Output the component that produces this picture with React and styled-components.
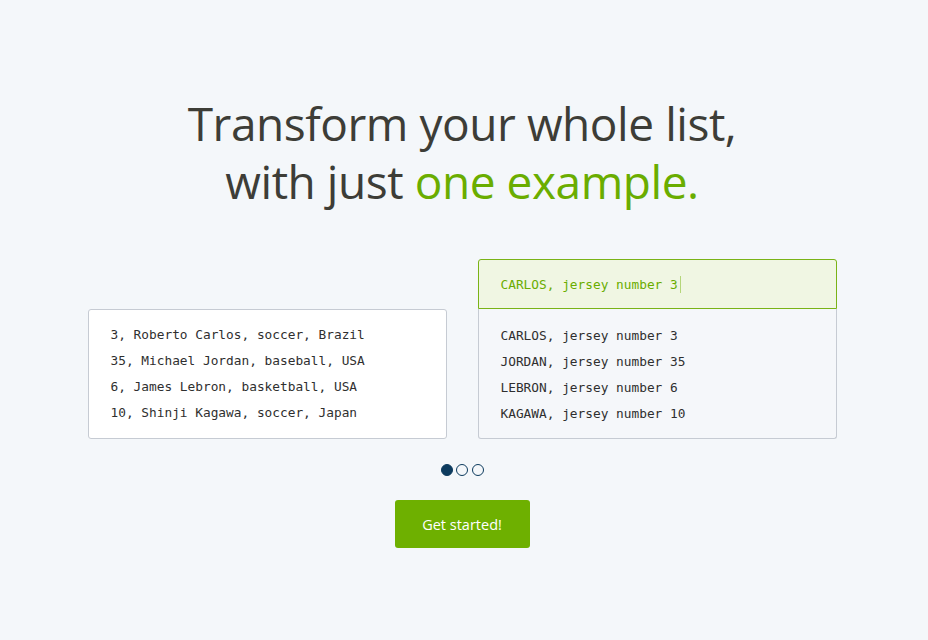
import React from 'react';
import styled, { createGlobalStyle } from 'styled-components';

const GlobalStyle = createGlobalStyle`
    body {
        margin: 0;
        background: #f4f7fa;
        font-family: "Open Sans", "Liberation Sans", sans-serif;
    }
`

const Page = styled.div`
    display: flex;
    flex-direction: column;
    align-items: center;
    padding: 94px 4px 0 0;
    min-height: 640px;
    box-sizing: border-box;
`

const Title = styled.h1`
    margin: 0;
    font-size: 46px;
    line-height: 58px;
    font-weight: 400;
    color: #3d3d37;
    text-align: center;
    letter-spacing: -0.45px;
`

const Accent = styled.span`
    color: #6aad00;
`

const Demo = styled.div`
    display: flex;
    align-items: flex-end;
    gap: 31px;
    margin-top: 49px;
`

const Card = styled.div`
    width: 359px;
    box-sizing: border-box;
    border-radius: 3px;
    background: #fff;
    border: 1px solid #c6cbd3;
`

const ResultCard = styled.div`
    width: 359px;
    box-sizing: border-box;
    display: flex;
    flex-direction: column;
`

const Header = styled.div`
    height: 50px;
    box-sizing: border-box;
    display: flex;
    align-items: center;
    padding: 0 22px;
    background: #f0f6e3;
    border: 1px solid #7ab317;
    border-radius: 3px 3px 0 0;
    font-family: "DejaVu Sans Mono", "Liberation Mono", monospace;
    font-size: 12.8px;
    color: #6aad00;
`

const Body = styled.div`
    background: #f5f7fa;
    border: 1px solid #c6cbd3;
    border-top: none;
    border-radius: 0 0 3px 3px;
`

const Caret = styled.span`
    display: inline-block;
    width: 1px;
    height: 17px;
    margin-left: 2px;
    background: #b5d67a;
`

const Lines = styled.div`
    padding: ${p => p.$top}px 22px ${p => p.$bottom}px;
    font-family: "DejaVu Sans Mono", "Liberation Mono", monospace;
    font-size: 12.8px;
    line-height: 26px;
    color: #2f2f2f;
    white-space: pre;
`

const Dots = styled.div`
    display: flex;
    gap: 3.5px;
    margin-top: 25px;
`

const Dot = styled.span`
    width: 12px;
    height: 12px;
    box-sizing: border-box;
    border-radius: 50%;
    border: 1px solid #0d3b5e;
    background: ${p => (p.$active ? '#0d3b5e' : 'transparent')};
`

const Button = styled.button`
    margin-top: 24px;
    width: 135px;
    height: 48px;
    border: none;
    border-radius: 3px;
    background: #6eb000;
    color: #fff;
    font-family: "Open Sans", "Liberation Sans", sans-serif;
    font-size: 14.5px;
    cursor: pointer;
`

const input = [
    '3, Roberto Carlos, soccer, Brazil',
    '35, Michael Jordan, baseball, USA',
    '6, James Lebron, basketball, USA',
    '10, Shinji Kagawa, soccer, Japan',
]

const output = [
    'CARLOS, jersey number 3',
    'JORDAN, jersey number 35',
    'LEBRON, jersey number 6',
    'KAGAWA, jersey number 10',
]

const App = () => {
    return (
        <Page>
            <GlobalStyle />
            <Title>
                Transform your whole list,
                <br />
                with just <Accent>one example.</Accent>
            </Title>
            <Demo>
                <Card>
                    <Lines $top={12} $bottom={12}>
                        {input.map(line => <div key={line}>{line}</div>)}
                    </Lines>
                </Card>
                <ResultCard>
                    <Header>
                        CARLOS, jersey number 3<Caret />
                    </Header>
                    <Body>
                        <Lines $top={14} $bottom={11}>
                            {output.map(line => <div key={line}>{line}</div>)}
                        </Lines>
                    </Body>
                </ResultCard>
            </Demo>
            <Dots>
                <Dot $active />
                <Dot />
                <Dot />
            </Dots>
            <Button>Get started!</Button>
        </Page>
    )
}

export default App;
